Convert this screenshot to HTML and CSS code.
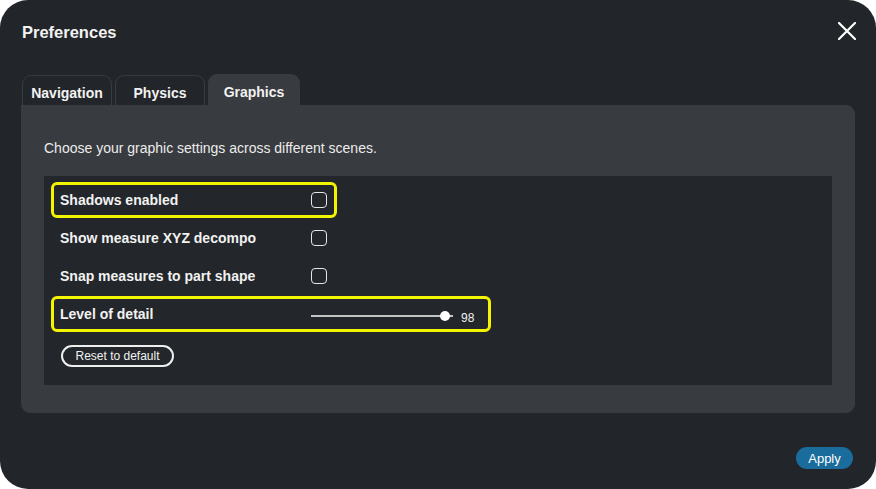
FILE: index.html
```html
<!DOCTYPE html>
<html lang="en">
  <head>
    <meta charset="UTF-8" />
    <meta name="viewport" content="width=device-width, initial-scale=1.0" />
    <title>Preferences</title>
    <link rel="stylesheet" href="styles.css">
  </head>
  <body>
    <div class="dialog">
      <div class="header">
        <h1 class="title">Preferences</h1>
        <button class="close" type="button" aria-label="Close">
          <svg width="18" height="18" viewBox="0 0 18 18">
            <path d="M1 1 L17 17 M17 1 L1 17" stroke="#fff" stroke-width="2.2" stroke-linecap="round" />
          </svg>
        </button>
      </div>

      <div class="tabs">
        <button class="tab" type="button">Navigation</button>
        <button class="tab" type="button">Physics</button>
        <button class="tab active" type="button">Graphics</button>
      </div>

      <div class="panel">
        <p class="intro">Choose your graphic settings across different scenes.</p>
        <div class="settings">
          <label class="row highlight">
            <span class="row-label">Shadows enabled</span>
            <input type="checkbox" class="check" />
          </label>
          <label class="row">
            <span class="row-label">Show measure XYZ decompo</span>
            <input type="checkbox" class="check" />
          </label>
          <label class="row">
            <span class="row-label">Snap measures to part shape</span>
            <input type="checkbox" class="check" />
          </label>
          <label class="row highlight slider-row">
            <span class="row-label">Level of detail</span>
            <input type="range" class="slider" min="0" max="100" value="98" />
            <span class="slider-value">98</span>
          </label>
          <button class="reset" type="button">Reset to default</button>
        </div>
      </div>

      <div class="footer">
        <button class="apply" type="button">Apply</button>
      </div>
    </div>
  </body>
</html>
```

FILE: styles.css
```css
:root {
  --dialog-bg: #222529;
  --panel-bg: #383b3f;
  --list-bg: #23262a;
  --tab-border: #383b40;
  --text: #f2f2f2;
  --highlight: #f4f400;
  --apply: #1a6c9c;
  --font-family: "Liberation Sans", Arial, sans-serif;
}

* {
  box-sizing: border-box;
}

body {
  margin: 0;
  background: #fff;
  font-family: var(--font-family);
  color: var(--text);
}

button {
  font-family: var(--font-family);
}

.dialog {
  width: 876px;
  height: 489px;
  background: var(--dialog-bg);
  border-radius: 28px;
  padding: 20px 21px;
  display: flex;
  flex-direction: column;
}

.header {
  display: flex;
  align-items: center;
  justify-content: space-between;
  height: 22px;
  margin-right: -1px;
}

.title {
  margin: 0 0 0 1px;
  padding-top: 2px;
  font-size: 16.5px;
  font-weight: bold;
  line-height: 22px;
}

.close {
  display: flex;
  padding: 0;
  border: none;
  background: none;
  cursor: pointer;
}

.tabs {
  display: flex;
  gap: 3px;
  margin-top: 33px;
  padding-left: 1px;
}

.tab {
  width: 90px;
  height: 30px;
  border: 1px solid var(--tab-border);
  border-bottom: none;
  border-radius: 9px 9px 0 0;
  background: var(--dialog-bg);
  color: var(--text);
  font-size: 14px;
  font-weight: bold;
  padding: 4px 0 0;
}

.tab.active {
  width: 92px;
  height: 31px;
  margin-top: -1px;
  border-color: var(--panel-bg);
  background: var(--panel-bg);
}

.panel {
  height: 308px;
  background: var(--panel-bg);
  border-radius: 0 9px 9px 9px;
  padding: 34px 23px 28px;
}

.intro {
  margin: 0;
  font-size: 14px;
  line-height: 18px;
  color: #ececec;
}

.settings {
  margin-top: 19px;
  background: var(--list-bg);
  padding: 6px 7px 18px;
  display: flex;
  flex-direction: column;
  align-items: flex-start;
  gap: 2px;
}

.row {
  display: flex;
  align-items: center;
  height: 36px;
  padding: 0 7px 0 6px;
  border: 3px solid transparent;
  border-radius: 6px;
}

.row.highlight {
  border-color: var(--highlight);
}

.row-label {
  width: 251px;
  font-size: 14px;
  font-weight: bold;
}

.check {
  appearance: none;
  -webkit-appearance: none;
  margin: 0;
  width: 16px;
  height: 16px;
  border: 1.5px solid #e6e6e6;
  border-radius: 4px;
  background: transparent;
}

.slider-row {
  padding-right: 14px;
}

.slider {
  -webkit-appearance: none;
  appearance: none;
  margin: 4px 0 0;
  width: 142px;
  height: 10px;
  background: transparent;
}

.slider::-webkit-slider-runnable-track {
  height: 2px;
  background: #c4c4c4;
}

.slider::-webkit-slider-thumb {
  -webkit-appearance: none;
  width: 10px;
  height: 10px;
  margin-top: -4px;
  border-radius: 50%;
  background: #fff;
}

.slider-value {
  margin-left: 8px;
  font-size: 12px;
  padding-top: 7px;
}

.reset {
  margin: 11px 0 0 10px;
  width: 113px;
  height: 22px;
  border: 2px solid #eee;
  border-radius: 12px;
  background: transparent;
  color: var(--text);
  font-size: 12px;
  padding: 0;
}

.footer {
  display: flex;
  justify-content: flex-end;
  margin-top: 34px;
  padding-right: 2px;
}

.apply {
  width: 57px;
  height: 22px;
  border: none;
  border-radius: 11px;
  background: var(--apply);
  color: #fff;
  font-size: 13px;
  padding: 0;
}
```
